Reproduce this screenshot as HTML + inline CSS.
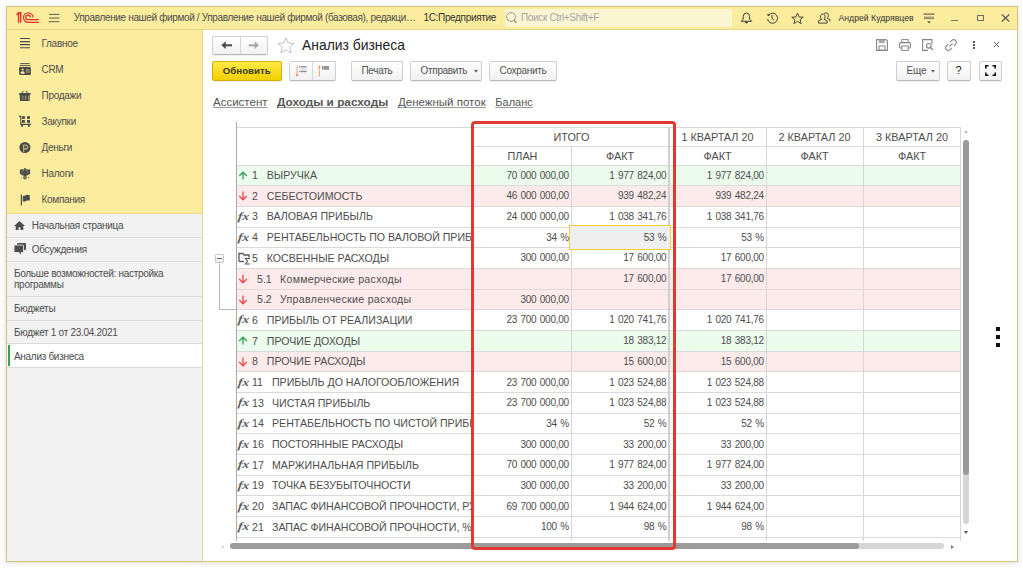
<!DOCTYPE html>
<html><head><meta charset="utf-8">
<style>
*{box-sizing:border-box;margin:0;padding:0}
html,body{width:1023px;height:568px;overflow:hidden;background:#fff;font-family:"Liberation Sans",sans-serif;color:#4d4d4d}
.abs,div,svg{position:absolute}
#win{left:5px;top:5px;width:1014px;height:558px;box-shadow:0 0 3px 1px rgba(0,0,0,0.08)}
#frame{left:6px;top:6px;width:1012px;height:556px;border:1px solid #d3c67c;background:#fff;box-shadow:0 1px 5px rgba(0,0,0,0.14)}
#hdr{left:7px;top:7px;width:1010px;height:22px;background:#fbec9e}
#hdrline{left:7px;top:29px;width:1010px;height:1px;background:#e3d488}
#side{left:7px;top:30px;width:195px;height:531px;background:#f2f2f2}
#sidey{left:7px;top:30px;width:195px;height:183px;background:#fbec9e}
#sideyline{left:7px;top:213px;width:195px;height:1px;background:#e8d98c}
#sideline{left:202px;top:30px;width:1px;height:531px;background:#e6d88f}
.htxt{white-space:nowrap;font-size:10px;letter-spacing:-0.35px;color:#4d4d4d;line-height:12px}
.si{white-space:nowrap;font-size:10px;letter-spacing:-0.29px;color:#4d4d4d;line-height:13.4px}
.sec{left:7px;width:195px;height:1px;background:#dcdcdc}
.st{white-space:nowrap;font-size:10px;letter-spacing:-0.3px;color:#4d4d4d;line-height:14.4px}
.btn{border:1px solid #cfcfcf;border-bottom-color:#b8b8b8;border-radius:2px;background:linear-gradient(#ffffff,#f1f1f1);box-shadow:0 1px 0 rgba(0,0,0,0.06)}
.bt{white-space:nowrap;font-size:10px;letter-spacing:-0.33px;color:#525252;line-height:12px}
.lnk{white-space:nowrap;font-size:11.5px;color:#555;line-height:14px;text-decoration:underline;text-decoration-color:#9a9a9a;text-underline-offset:0.8px;text-decoration-skip-ink:none}
.rbg{left:237px;width:724px}
.hl{height:1px;background:#dadada}
.vl{width:1px;background:#d6d6d6}
.vl2{width:2px;background:#d0d0d0}
.th{white-space:nowrap;text-align:center;font-size:10.8px;color:#4d4d4d}
.tn{white-space:nowrap;font-size:10.6px;color:#4d4d4d;line-height:20.68px}
.tl{white-space:nowrap;overflow:hidden;font-size:10.6px;color:#4d4d4d;line-height:20.68px}
.tl2{letter-spacing:0.3px}
.td{white-space:nowrap;width:96px;text-align:right;font-size:10px;letter-spacing:-0.25px;word-spacing:0.9px;color:#4d4d4d;line-height:20.68px}
.fx{font-family:"Liberation Serif",serif;font-style:italic;font-weight:bold;font-size:11.2px;color:#5e5e5e;line-height:20.68px;letter-spacing:-0.1px;transform:scaleX(1.22) skewX(-6deg);transform-origin:0 50%}
.sel{border:1.4px solid #f7cb2e;background:#efefef}
</style></head><body>
<div id="frame"></div>
<div id="hdr"></div>
<div id="hdrline"></div>

<!-- header -->
<svg style="left:14px;top:10px" width="28" height="16" viewBox="14 10 28 16">
 <path d="M16.5 15.2L18.3 12.7" fill="none" stroke="#e0302c" stroke-width="1.3"/>
 <path d="M18.55 12.5V22.8M20.75 12.1V22.8M18 12.75H21.5" fill="none" stroke="#e0302c" stroke-width="1.4"/>
 <path d="M33.05 17.6A4.75 4.75 0 1 0 28.3 22.35H38.8" fill="none" stroke="#e0302c" stroke-width="1.3"/>
 <path d="M30.3 17.4A2.2 2.2 0 1 0 28.1 19.6H38.8" fill="none" stroke="#e0302c" stroke-width="1.3"/>
</svg>
<svg style="left:49px;top:13px" width="11" height="10" viewBox="0 0 11 10"><path d="M0 1.4H10.5M0 5H10.5M0 8.7H10.5" stroke="#5f5f4f" stroke-width="1"/></svg>
<div class="htxt" style="left:73.7px;top:12px">Управление нашей фирмой / Управление нашей фирмой (базовая), редакци…</div>
<div class="htxt" style="left:423.5px;top:12px;color:#333;letter-spacing:-0.34px">1С:Предприятие</div>
<div style="left:505px;top:9px;width:227px;height:18px;background:#fcf5d2"></div>
<svg style="left:505px;top:11px" width="13" height="13" viewBox="505 11 13 13"><circle cx="511" cy="17" r="4.4" fill="none" stroke="#8e8e8a" stroke-width="0.9"/><path d="M514 20.2L516.6 22.8" stroke="#8e8e8a" stroke-width="1.4"/></svg>
<div class="htxt" style="left:521px;top:12px;color:#a5a5a5;letter-spacing:-0.32px">Поиск Ctrl+Shift+F</div>
<!-- bell -->
<svg style="left:740px;top:11.5px" width="13" height="13" viewBox="740 11.5 13 13"><path d="M741.2 20.8H751.6L749.6 18.6V16.2Q749.5 12.6 746.4 12.4Q743.3 12.6 743.2 16.2V18.6Z" fill="none" stroke="#3d3d3d" stroke-width="1" stroke-linejoin="round"/><path d="M744.6 21.6H748.2L746.4 23.2Z" fill="#3d3d3d"/></svg>
<!-- history -->
<svg style="left:766px;top:11.5px" width="13" height="13" viewBox="766 11.5 13 13"><path d="M768.7 14.5A5 5 0 1 1 767.6 18.6" fill="none" stroke="#3d3d3d" stroke-width="1"/><path d="M767.2 14.2L768.9 15.4 769.7 13.6Z" fill="#3d3d3d" stroke="#3d3d3d" stroke-width="0.6"/><path d="M772 14.5V17.8L774 19.6" fill="none" stroke="#3d3d3d" stroke-width="1"/></svg>
<!-- star -->
<svg style="left:791px;top:11.5px" width="13" height="13" viewBox="0 0 13 13"><path d="M6.5 1.2L8.2 5 12.2 5.2 9.1 7.7 10.2 11.6 6.5 9.4 2.8 11.6 3.9 7.7 0.8 5.2 4.8 5Z" fill="none" stroke="#3d3d3d" stroke-width="0.95" stroke-linejoin="round"/></svg>
<!-- user -->
<svg style="left:816.5px;top:11.5px" width="14" height="13" viewBox="816.5 11.5 14 13"><path d="M822.3 13.6C820.6 13.6 819.9 15 820 16.4C820.1 17.6 820.6 18.4 821.2 18.8L818 20.4V22.6H826.6V20.4L823.4 18.8C824 18.4 824.5 17.6 824.6 16.4C824.7 15 824 13.6 822.3 13.6Z" fill="none" stroke="#3d3d3d" stroke-width="0.95" stroke-linejoin="round"/><path d="M823.6 13.2C824.2 12.6 825 12.4 825.6 12.4C827.3 12.4 828 13.8 827.9 15.2C827.8 16.4 827.3 17.2 826.7 17.6L829.4 19.2V21" fill="none" stroke="#3d3d3d" stroke-width="0.95" stroke-linejoin="round"/></svg>
<div class="htxt" style="left:838.5px;top:12px;color:#333;font-size:8.7px;letter-spacing:0">Андрей Кудрявцев</div>
<svg style="left:923px;top:13px" width="12" height="11" viewBox="0 0 12 11"><path d="M0.5 1.1H11.5" stroke="#4a4a40" stroke-width="1"/><path d="M1 4.2H11M1 5.6H11" stroke="#85806a" stroke-width="1"/><path d="M4.2 8.4H7.8L6 10.2Z" fill="#333"/></svg>
<div style="left:951px;top:20px;width:7px;height:1.2px;background:#777"></div>
<div style="left:976.6px;top:14.6px;width:7.2px;height:6.8px;border:1px solid #6e6e64"></div>
<svg style="left:1001px;top:14px" width="9" height="8" viewBox="0 0 9 8"><path d="M0.8 0.5L8.2 7.5M8.2 0.5L0.8 7.5" stroke="#555" stroke-width="1.1"/></svg>

<!-- sidebar -->
<div id="side"></div>
<div id="sidey"></div>
<div id="sideyline"></div>
<div id="sideline"></div>
<svg class="ic" style="left:18px;top:36px" width="14" height="14" viewBox="18 36 14 14"><path d="M20 38.5H30M20 41.6H30M20 44.65H30M20 47.7H30" stroke="#4a4a4a" stroke-width="1.15"/></svg>
<div class="si" style="left:41.5px;top:37px">Главное</div>
<svg class="ic" style="left:18px;top:62px" width="14" height="14" viewBox="18 62 14 14"><rect x="20.3" y="63" width="9.4" height="1.1" fill="#4a4a4a" opacity="0.85"/><rect x="19.6" y="65" width="10.8" height="1.1" fill="#4a4a4a" opacity="0.85"/><rect x="19.1" y="67" width="11.8" height="8" rx="1.2" fill="#4a4a4a"/><circle cx="22.6" cy="69.4" r="1" fill="#fbec9e"/><path d="M20.6 73.8V72.6L21.8 71.2H23.4L24.6 72.6V73.8Z" fill="#fbec9e"/><rect x="26" y="69" width="3.4" height="3.8" fill="#a89e6a"/><path d="M26.3 70H29M26.3 71.8H29" stroke="#4a4a4a" stroke-width="0.6"/></svg>
<div class="si" style="left:41.5px;top:63px">CRM</div>
<svg class="ic" style="left:18px;top:89px" width="14" height="13" viewBox="18 89 14 13"><path d="M21.8 93.2L23.4 90.9M27.6 93.2L26 90.9" stroke="#4a4a4a" stroke-width="1"/><rect x="19" y="93" width="11.5" height="1.9" rx="0.6" fill="#4a4a4a"/><path d="M19.8 94.8H29.8L29.6 100.9H20Z" fill="#4a4a4a"/><path d="M22.7 95.6V99.8M25.6 95.6V99.8M28.5 95.6V99.8" stroke="#a89e6a" stroke-width="1"/></svg>
<div class="si" style="left:41.5px;top:89px">Продажи</div>
<svg class="ic" style="left:18px;top:115px" width="14" height="13" viewBox="18 115 14 13"><path d="M19 116.4H20.8V124.4H30.8" fill="none" stroke="#4a4a4a" stroke-width="1.1"/><rect x="22" y="116.2" width="2.9" height="2.7" fill="#4a4a4a"/><rect x="27" y="116.2" width="2.9" height="2.7" fill="#4a4a4a"/><rect x="22" y="120" width="2.9" height="2.8" fill="#4a4a4a"/><rect x="27" y="120" width="2.9" height="2.8" fill="#4a4a4a"/><rect x="21.2" y="124.4" width="1.8" height="2.4" fill="#4a4a4a"/><rect x="28" y="124.4" width="1.8" height="2.4" fill="#4a4a4a"/></svg>
<div class="si" style="left:41.5px;top:115px">Закупки</div>
<svg class="ic" style="left:18px;top:141px" width="14" height="14" viewBox="18 141 14 14"><circle cx="24.9" cy="147.5" r="5.5" fill="#4a4a4a"/><path d="M23.6 152.2V145.2H25.8A1.9 1.9 0 0 1 25.8 149H23.6" fill="none" stroke="#b5ab78" stroke-width="1.3"/></svg>
<div class="si" style="left:41.5px;top:141px">Деньги</div>
<svg class="ic" style="left:18px;top:166px" width="14" height="15" viewBox="18 166 14 15"><rect x="24.2" y="168" width="1.6" height="1.5" fill="#4a4a4a"/><path d="M19.9 169.6L23.8 169.2L24.3 175.8L21.6 175L19.9 173.2Z" fill="#4a4a4a"/><path d="M30.1 169.6L26.2 169.2L25.7 175.8L28.4 175L30.1 173.2Z" fill="#4a4a4a"/><rect x="23.8" y="169.4" width="2.4" height="7.2" fill="#4a4a4a"/><path d="M23.1 176.6H26.9L26.7 178.8Q25 180.3 23.3 178.8Z" fill="#4a4a4a" opacity="0.85"/><circle cx="22.9" cy="170.9" r="0.65" fill="#b9ae78"/><circle cx="27.1" cy="170.9" r="0.65" fill="#b9ae78"/><path d="M21.6 172.2L23 173.6M28.4 172.2L27 173.6" stroke="#b9ae78" stroke-width="0.6"/><circle cx="28.6" cy="177.6" r="0.65" fill="#4a4a4a"/><path d="M21.4 177V178.8" stroke="#9a9070" stroke-width="0.8"/><path d="M23.5 177.8H26.5" stroke="#b9ae78" stroke-width="0.5"/></svg>
<div class="si" style="left:41.5px;top:167px">Налоги</div>
<svg class="ic" style="left:18px;top:192px" width="14" height="15" viewBox="18 192 14 15"><path d="M21.4 194.4V205.5" stroke="#4a4a4a" stroke-width="1.2"/><path d="M22.8 196C24.5 196.6 25.8 194.6 27.6 194.8C28.6 194.9 29.3 195.2 29.8 195.4V200.9C29 200.4 28.3 200.3 27.6 200.4C25.8 200.6 24.5 202 22.8 201.5Z" fill="#4a4a4a"/></svg>
<div class="si" style="left:41.5px;top:193px">Компания</div>
<!-- sections -->
<svg style="left:14px;top:220.5px" width="11" height="9" viewBox="0 0 11 9"><path d="M5.5 0L11 5H9.3V9H6.5V6.2H4.5V9H1.7V5H0Z" fill="#4d4d4d"/></svg>
<div class="st" style="left:31.8px;top:219px">Начальная страница</div>
<div class="sec" style="top:237px"></div>
<svg style="left:14px;top:243px" width="12" height="12" viewBox="0 0 12 12"><rect x="3" y="0" width="9" height="7" rx="1" fill="#4d4d4d"/><rect x="0" y="2" width="9.5" height="7.5" rx="1" fill="#4d4d4d" stroke="#f2f2f2" stroke-width="0.8"/><path d="M5 9.3L6.3 11.8 7.2 9.3Z" fill="#4d4d4d"/></svg>
<div class="st" style="left:31.8px;top:242.5px">Обсуждения</div>
<div class="sec" style="top:261px"></div>
<div class="st" style="left:14px;top:266.5px">Больше возможностей: настройка</div>
<div class="st" style="left:14px;top:278px">программы</div>
<div class="sec" style="top:296px"></div>
<div class="st" style="left:14px;top:302px">Бюджеты</div>
<div class="sec" style="top:320px"></div>
<div class="st" style="left:14px;top:325.5px">Бюджет 1 от 23.04.2021</div>
<div class="sec" style="top:343px"></div>
<div style="left:7px;top:344px;width:195px;height:23px;background:#fff"></div>
<div style="left:8px;top:345px;width:2px;height:21px;background:#3aa05a"></div>
<div class="st" style="left:14px;top:349.5px">Анализ бизнеса</div>
<div class="sec" style="top:367px"></div>

<!-- form header -->
<div class="btn" style="left:212px;top:36px;width:56px;height:18.5px"></div>
<div style="left:240px;top:37px;width:1px;height:17px;background:#d4d4d4"></div>
<svg style="left:220px;top:40px" width="14" height="10" viewBox="220 40 14 10"><path d="M221.3 45.2L225.8 41.3V49.1Z" fill="#4e4e4e"/><path d="M225 45.3H232" stroke="#4e4e4e" stroke-width="2.1"/></svg>
<svg style="left:247px;top:40px" width="14" height="10" viewBox="247 40 14 10"><path d="M259 45.2L254.6 41.3V49.1Z" fill="#a8a8a8"/><path d="M248.8 45.3H255.4" stroke="#a8a8a8" stroke-width="2.1"/></svg>
<svg style="left:276.5px;top:36.5px" width="18" height="17" viewBox="0 0 18 17"><path d="M9 0.8L11.3 6 17 6.4 12.7 10.2 14.1 16 9 12.9 3.9 16 5.3 10.2 1 6.4 6.7 6Z" fill="#fff" stroke="#b5bcc3" stroke-width="0.9" stroke-linejoin="round"/></svg>
<div style="left:302px;top:37.4px;white-space:nowrap;font-size:13.9px;color:#222;line-height:16px">Анализ бизнеса</div>

<svg style="left:875.5px;top:39px" width="12" height="12" viewBox="0 0 12 12"><path d="M0.6 0.6H10L11.4 2V11.4H0.6Z" fill="none" stroke="#858585" stroke-width="1.1"/><rect x="2.8" y="0.6" width="6" height="3.6" fill="#a8a8a8"/><rect x="3" y="7" width="6" height="4.2" fill="none" stroke="#858585" stroke-width="1"/></svg>
<svg style="left:899px;top:39px" width="12" height="12" viewBox="0 0 12 12"><rect x="2.8" y="0.6" width="6.4" height="3" fill="none" stroke="#858585" stroke-width="1"/><rect x="0.6" y="3.6" width="10.8" height="5.4" rx="1" fill="none" stroke="#858585" stroke-width="1.1"/><rect x="2.8" y="7" width="6.4" height="4.4" fill="#fff" stroke="#858585" stroke-width="1"/></svg>
<svg style="left:922px;top:39px" width="12" height="12" viewBox="0 0 12 12"><path d="M6 11.4H0.6V0.6H10V5" fill="none" stroke="#858585" stroke-width="1.1"/><circle cx="6.8" cy="6.8" r="2.3" fill="none" stroke="#858585" stroke-width="1.1"/><path d="M8.5 8.5L11 11" stroke="#858585" stroke-width="1.3"/></svg>
<svg style="left:945px;top:39px" width="12" height="12" viewBox="0 0 12 12"><path d="M5 3.2L6.8 1.4A2 2 0 0 1 10.6 5.2L8.8 7M3.2 5L1.4 6.8A2 2 0 0 0 5.2 10.6L7 8.8M4.3 7.7L7.7 4.3" fill="none" stroke="#8a8a8a" stroke-width="1.1"/></svg>
<div style="left:972.6px;top:41.2px;width:2.2px;height:2.2px;background:#555"></div>
<div style="left:972.6px;top:44.1px;width:2.2px;height:2.2px;background:#555"></div>
<div style="left:972.6px;top:47px;width:2.2px;height:2.2px;background:#555"></div>
<svg style="left:993px;top:40.8px" width="7" height="7" viewBox="0 0 7 7"><path d="M1 1L6 6M6 1L1 6" stroke="#666" stroke-width="1"/></svg>

<!-- toolbar -->
<div style="left:212px;top:61px;width:69.5px;height:20px;border:1px solid #d6b000;border-radius:2px;background:linear-gradient(#ffeb4a,#f3cf00);box-shadow:0 1px 0 rgba(0,0,0,0.08)"></div>
<div style="left:222.8px;top:65px;white-space:nowrap;font-size:9.7px;letter-spacing:0px;font-weight:bold;color:#3b3b2b;line-height:12px">Обновить</div>

<div class="btn" style="left:289px;top:61px;width:47px;height:19.5px"></div>
<div style="left:312px;top:62px;width:1px;height:18px;background:#d8d8d8"></div>
<svg style="left:294px;top:63px" width="40" height="16" viewBox="294 63 40 16"><path d="M297.1 65.3V75" stroke="#f49a66" stroke-width="0.9"/><circle cx="297.1" cy="75.2" r="1.15" fill="#f28a50"/><rect x="299.1" y="66.1" width="0.8" height="1.6" fill="#8a8a8a"/><rect x="300.3" y="66.1" width="6.4" height="1.5" fill="#8c8c8c"/><rect x="300.3" y="67.6" width="6.4" height="2.6" fill="#e2e2e2"/><rect x="299.1" y="70.8" width="0.8" height="1.2" fill="#8a8a8a"/><rect x="300.3" y="70.8" width="6.4" height="1.3" fill="#8c8c8c"/><rect x="300.3" y="72.1" width="6.4" height="1.6" fill="#e6e6e6"/><path d="M319.4 66.5V76.6" stroke="#f49a66" stroke-width="0.9"/><circle cx="319.4" cy="66.8" r="1.15" fill="#f28a50"/><rect x="322" y="66" width="0.9" height="3.8" fill="#8a8a8a"/><rect x="323.3" y="66" width="5.7" height="3.8" fill="#939393"/></svg>
<div class="btn" style="left:351px;top:61px;width:52px;height:20px"></div>
<div class="bt" style="left:361.5px;top:65.3px">Печать</div>
<div class="btn" style="left:410px;top:61px;width:72px;height:20px"></div>
<div class="bt" style="left:420.6px;top:65.3px">Отправить</div>
<svg style="left:473.5px;top:70.3px" width="4" height="2.5" viewBox="0 0 4 2.5"><path d="M0 0H4L2 2.5Z" fill="#555"/></svg>
<div class="btn" style="left:489px;top:61px;width:68px;height:20px"></div>
<div class="bt" style="left:499.6px;top:65.3px">Сохранить</div>

<div class="btn" style="left:896px;top:61px;width:44px;height:20px"></div>
<div class="bt" style="left:906.5px;top:64.5px;letter-spacing:-0.1px">Еще</div>
<svg style="left:931px;top:70.3px" width="4" height="2.5" viewBox="0 0 4 2.5"><path d="M0 0H4L2 2.5Z" fill="#555"/></svg>
<div class="btn" style="left:947px;top:61px;width:24px;height:20px"></div>
<div class="bt" style="left:955.5px;top:64.3px;font-size:11px;color:#222">?</div>
<div class="btn" style="left:978.5px;top:61px;width:23px;height:20px"></div>
<svg style="left:984.5px;top:65px" width="11" height="11" viewBox="0 0 11 11"><path d="M0.8 3.5V0.8H3.5M7.5 0.8H10.2V3.5M10.2 7.5V10.2H7.5M3.5 10.2H0.8V7.5" fill="none" stroke="#111" stroke-width="1.6"/></svg>

<!-- links -->
<div class="lnk" style="left:213px;top:95px">Ассистент</div>
<div class="lnk" style="left:277px;top:95px;font-weight:bold;font-size:11.8px;color:#555">Доходы и расходы</div>
<div class="lnk" style="left:398px;top:95px">Денежный поток</div>
<div class="lnk" style="left:495.3px;top:95px;font-size:11px">Баланс</div>

<!-- table -->
<div class="rbg" style="top:165.10px;height:20.68px;background:#ebfbec"></div>
<div class="rbg" style="top:185.78px;height:20.68px;background:#fdebeb"></div>
<div class="rbg" style="top:206.46px;height:20.68px;background:#ffffff"></div>
<div class="rbg" style="top:227.14px;height:20.68px;background:#ffffff"></div>
<div class="rbg" style="top:247.82px;height:20.68px;background:#ffffff"></div>
<div class="rbg" style="top:268.50px;height:20.68px;background:#fdebeb"></div>
<div class="rbg" style="top:289.18px;height:20.68px;background:#fdebeb"></div>
<div class="rbg" style="top:309.86px;height:20.68px;background:#ffffff"></div>
<div class="rbg" style="top:330.54px;height:20.68px;background:#ebfbec"></div>
<div class="rbg" style="top:351.22px;height:20.68px;background:#fdebeb"></div>
<div class="rbg" style="top:371.90px;height:20.68px;background:#ffffff"></div>
<div class="rbg" style="top:392.58px;height:20.68px;background:#ffffff"></div>
<div class="rbg" style="top:413.26px;height:20.68px;background:#ffffff"></div>
<div class="rbg" style="top:433.94px;height:20.68px;background:#ffffff"></div>
<div class="rbg" style="top:454.62px;height:20.68px;background:#ffffff"></div>
<div class="rbg" style="top:475.30px;height:20.68px;background:#ffffff"></div>
<div class="rbg" style="top:495.98px;height:20.68px;background:#ffffff"></div>
<div class="rbg" style="top:516.66px;height:20.68px;background:#ffffff"></div>
<div class="hl" style="top:127px;left:236px;width:725px"></div>
<div class="hl" style="top:146px;left:472px;width:489px"></div>
<div class="hl" style="top:165px;left:236px;width:725px"></div>
<div class="hl" style="top:185px;left:236px;width:725px"></div>
<div class="hl" style="top:206px;left:236px;width:725px"></div>
<div class="hl" style="top:227px;left:236px;width:725px"></div>
<div class="hl" style="top:247px;left:236px;width:725px"></div>
<div class="hl" style="top:268px;left:236px;width:725px"></div>
<div class="hl" style="top:289px;left:236px;width:725px"></div>
<div class="hl" style="top:309px;left:236px;width:725px"></div>
<div class="hl" style="top:330px;left:236px;width:725px"></div>
<div class="hl" style="top:351px;left:236px;width:725px"></div>
<div class="hl" style="top:371px;left:236px;width:725px"></div>
<div class="hl" style="top:392px;left:236px;width:725px"></div>
<div class="hl" style="top:413px;left:236px;width:725px"></div>
<div class="hl" style="top:433px;left:236px;width:725px"></div>
<div class="hl" style="top:454px;left:236px;width:725px"></div>
<div class="hl" style="top:475px;left:236px;width:725px"></div>
<div class="hl" style="top:495px;left:236px;width:725px"></div>
<div class="hl" style="top:516px;left:236px;width:725px"></div>
<div class="hl" style="top:537px;left:236px;width:725px"></div>
<div class="vl" style="left:236px;top:122px;height:419px;background:#a9a9a9"></div>
<div class="vl" style="left:472px;top:127px;height:414px"></div>
<div class="vl" style="left:571px;top:146px;height:395px"></div>
<div class="vl" style="left:669px;top:127px;height:414px"></div>
<div class="vl" style="left:766px;top:127px;height:414px"></div>
<div class="vl" style="left:863px;top:127px;height:414px"></div>
<div class="vl" style="left:960px;top:127px;height:414px"></div>
<div class="vl2" style="left:668px;top:127px;height:414px"></div>
<div class="th" style="left:474px;width:195px;top:127.7px;height:19px;line-height:19px">ИТОГО</div>
<div class="th" style="left:474px;width:97px;top:146.7px;height:19px;line-height:19px">ПЛАН</div>
<div class="th" style="left:571px;width:98px;top:146.7px;height:19px;line-height:19px">ФАКТ</div>
<div class="th" style="left:669px;width:97px;top:127.7px;height:19px;line-height:19px">1 КВАРТАЛ 20</div>
<div class="th" style="left:669px;width:97px;top:146.7px;height:19px;line-height:19px">ФАКТ</div>
<div class="th" style="left:766px;width:97px;top:127.7px;height:19px;line-height:19px">2 КВАРТАЛ 20</div>
<div class="th" style="left:766px;width:97px;top:146.7px;height:19px;line-height:19px">ФАКТ</div>
<div class="th" style="left:863px;width:98px;top:127.7px;height:19px;line-height:19px">3 КВАРТАЛ 20</div>
<div class="th" style="left:863px;width:98px;top:146.7px;height:19px;line-height:19px">ФАКТ</div>
<div class="sel" style="left:569px;top:225.34px;width:102px;height:24.4px"></div>
<svg class="ic" style="left:238px;top:170.6px" width="10" height="10" viewBox="0 0 10 10"><path d="M5 8.5V1.2M1.2 5L5 1.2 8.8 5" fill="none" stroke="#35a55c" stroke-width="1.35"/></svg>
<div class="tn" style="left:252px;top:165.10px">1</div>
<div class="tl" style="left:266.8px;top:165.10px;width:204.2px">ВЫРУЧКА</div>
<div class="td" style="left:472.9px;top:165.70px">70 000 000,00</div>
<div class="td" style="left:570.4px;top:165.70px">1 977 824,00</div>
<div class="td" style="left:667.9px;top:165.70px">1 977 824,00</div>
<svg class="ic" style="left:238px;top:191.28px" width="10" height="10" viewBox="0 0 10 10"><path d="M5 0.5V8.8M1.2 5L5 8.8 8.8 5" fill="none" stroke="#f04a4c" stroke-width="1.35"/></svg>
<div class="tn" style="left:252px;top:185.78px">2</div>
<div class="tl" style="left:266.8px;top:185.78px;width:204.2px">СЕБЕСТОИМОСТЬ</div>
<div class="td" style="left:472.9px;top:186.38px">46 000 000,00</div>
<div class="td" style="left:570.4px;top:186.38px">939 482,24</div>
<div class="td" style="left:667.9px;top:186.38px">939 482,24</div>
<div class="fx" style="left:237.7px;top:206.06px">fx</div>
<div class="tn" style="left:252px;top:206.46px">3</div>
<div class="tl" style="left:266.8px;top:206.46px;width:204.2px">ВАЛОВАЯ ПРИБЫЛЬ</div>
<div class="td" style="left:472.9px;top:207.06px">24 000 000,00</div>
<div class="td" style="left:570.4px;top:207.06px">1 038 341,76</div>
<div class="td" style="left:667.9px;top:207.06px">1 038 341,76</div>
<div class="fx" style="left:237.7px;top:226.74px">fx</div>
<div class="tn" style="left:252px;top:227.14px">4</div>
<div class="tl" style="left:266.8px;top:227.14px;width:204.2px">РЕНТАБЕЛЬНОСТЬ ПО ВАЛОВОЙ ПРИБЫЛИ</div>
<div class="td" style="left:472.9px;top:227.74px">34 %</div>
<div class="td" style="left:570.4px;top:227.74px">53 %</div>
<div class="td" style="left:667.9px;top:227.74px">53 %</div>
<svg class="ic" style="left:238px;top:251.82px" width="13" height="13" viewBox="0 0 13 13"><path d="M1 9.5V1.5h4l1 1.5h5v2.5" fill="none" stroke="#555" stroke-width="1.3"/><path d="M1 9.5h5" fill="none" stroke="#555" stroke-width="1.3"/><path d="M12 6.5H7.5l2 2.8-2 2.7H12" fill="none" stroke="#555" stroke-width="1.1"/></svg>
<div class="tn" style="left:252px;top:247.82px">5</div>
<div class="tl" style="left:266.8px;top:247.82px;width:204.2px">КОСВЕННЫЕ РАСХОДЫ</div>
<div class="td" style="left:472.9px;top:248.42px">300 000,00</div>
<div class="td" style="left:570.4px;top:248.42px">17 600,00</div>
<div class="td" style="left:667.9px;top:248.42px">17 600,00</div>
<svg class="ic" style="left:238px;top:274.0px" width="10" height="10" viewBox="0 0 10 10"><path d="M5 0.5V8.8M1.2 5L5 8.8 8.8 5" fill="none" stroke="#f04a4c" stroke-width="1.35"/></svg>
<div class="tn" style="left:257px;top:268.50px">5.1</div>
<div class="tl tl2" style="left:280px;top:268.50px;width:190px">Коммерческие расходы</div>
<div class="td" style="left:570.4px;top:269.10px">17 600,00</div>
<div class="td" style="left:667.9px;top:269.10px">17 600,00</div>
<svg class="ic" style="left:238px;top:294.68px" width="10" height="10" viewBox="0 0 10 10"><path d="M5 0.5V8.8M1.2 5L5 8.8 8.8 5" fill="none" stroke="#f04a4c" stroke-width="1.35"/></svg>
<div class="tn" style="left:257px;top:289.18px">5.2</div>
<div class="tl tl2" style="left:280px;top:289.18px;width:190px">Управленческие расходы</div>
<div class="td" style="left:472.9px;top:289.78px">300 000,00</div>
<div class="fx" style="left:237.7px;top:309.46px">fx</div>
<div class="tn" style="left:252px;top:309.86px">6</div>
<div class="tl" style="left:266.8px;top:309.86px;width:204.2px">ПРИБЫЛЬ ОТ РЕАЛИЗАЦИИ</div>
<div class="td" style="left:472.9px;top:310.46px">23 700 000,00</div>
<div class="td" style="left:570.4px;top:310.46px">1 020 741,76</div>
<div class="td" style="left:667.9px;top:310.46px">1 020 741,76</div>
<svg class="ic" style="left:238px;top:336.03999999999996px" width="10" height="10" viewBox="0 0 10 10"><path d="M5 8.5V1.2M1.2 5L5 1.2 8.8 5" fill="none" stroke="#35a55c" stroke-width="1.35"/></svg>
<div class="tn" style="left:252px;top:330.54px">7</div>
<div class="tl" style="left:266.8px;top:330.54px;width:204.2px">ПРОЧИЕ ДОХОДЫ</div>
<div class="td" style="left:570.4px;top:331.14px">18 383,12</div>
<div class="td" style="left:667.9px;top:331.14px">18 383,12</div>
<svg class="ic" style="left:238px;top:356.72px" width="10" height="10" viewBox="0 0 10 10"><path d="M5 0.5V8.8M1.2 5L5 8.8 8.8 5" fill="none" stroke="#f04a4c" stroke-width="1.35"/></svg>
<div class="tn" style="left:252px;top:351.22px">8</div>
<div class="tl" style="left:266.8px;top:351.22px;width:204.2px">ПРОЧИЕ РАСХОДЫ</div>
<div class="td" style="left:570.4px;top:351.82px">15 600,00</div>
<div class="td" style="left:667.9px;top:351.82px">15 600,00</div>
<div class="fx" style="left:237.7px;top:371.50px">fx</div>
<div class="tn" style="left:252px;top:371.90px">11</div>
<div class="tl" style="left:272px;top:371.90px;width:199px">ПРИБЫЛЬ ДО НАЛОГООБЛОЖЕНИЯ</div>
<div class="td" style="left:472.9px;top:372.50px">23 700 000,00</div>
<div class="td" style="left:570.4px;top:372.50px">1 023 524,88</div>
<div class="td" style="left:667.9px;top:372.50px">1 023 524,88</div>
<div class="fx" style="left:237.7px;top:392.18px">fx</div>
<div class="tn" style="left:252px;top:392.58px">13</div>
<div class="tl" style="left:272px;top:392.58px;width:199px">ЧИСТАЯ ПРИБЫЛЬ</div>
<div class="td" style="left:472.9px;top:393.18px">23 700 000,00</div>
<div class="td" style="left:570.4px;top:393.18px">1 023 524,88</div>
<div class="td" style="left:667.9px;top:393.18px">1 023 524,88</div>
<div class="fx" style="left:237.7px;top:412.86px">fx</div>
<div class="tn" style="left:252px;top:413.26px">14</div>
<div class="tl" style="left:272px;top:413.26px;width:199px">РЕНТАБЕЛЬНОСТЬ ПО ЧИСТОЙ ПРИБЫЛИ</div>
<div class="td" style="left:472.9px;top:413.86px">34 %</div>
<div class="td" style="left:570.4px;top:413.86px">52 %</div>
<div class="td" style="left:667.9px;top:413.86px">52 %</div>
<div class="fx" style="left:237.7px;top:433.54px">fx</div>
<div class="tn" style="left:252px;top:433.94px">16</div>
<div class="tl" style="left:272px;top:433.94px;width:199px">ПОСТОЯННЫЕ РАСХОДЫ</div>
<div class="td" style="left:472.9px;top:434.54px">300 000,00</div>
<div class="td" style="left:570.4px;top:434.54px">33 200,00</div>
<div class="td" style="left:667.9px;top:434.54px">33 200,00</div>
<div class="fx" style="left:237.7px;top:454.22px">fx</div>
<div class="tn" style="left:252px;top:454.62px">17</div>
<div class="tl" style="left:272px;top:454.62px;width:199px">МАРЖИНАЛЬНАЯ ПРИБЫЛЬ</div>
<div class="td" style="left:472.9px;top:455.22px">70 000 000,00</div>
<div class="td" style="left:570.4px;top:455.22px">1 977 824,00</div>
<div class="td" style="left:667.9px;top:455.22px">1 977 824,00</div>
<div class="fx" style="left:237.7px;top:474.90px">fx</div>
<div class="tn" style="left:252px;top:475.30px">19</div>
<div class="tl" style="left:272px;top:475.30px;width:199px">ТОЧКА БЕЗУБЫТОЧНОСТИ</div>
<div class="td" style="left:472.9px;top:475.90px">300 000,00</div>
<div class="td" style="left:570.4px;top:475.90px">33 200,00</div>
<div class="td" style="left:667.9px;top:475.90px">33 200,00</div>
<div class="fx" style="left:237.7px;top:495.58px">fx</div>
<div class="tn" style="left:252px;top:495.98px">20</div>
<div class="tl" style="left:272px;top:495.98px;width:199px">ЗАПАС ФИНАНСОВОЙ ПРОЧНОСТИ, РУБ</div>
<div class="td" style="left:472.9px;top:496.58px">69 700 000,00</div>
<div class="td" style="left:570.4px;top:496.58px">1 944 624,00</div>
<div class="td" style="left:667.9px;top:496.58px">1 944 624,00</div>
<div class="fx" style="left:237.7px;top:516.26px">fx</div>
<div class="tn" style="left:252px;top:516.66px">21</div>
<div class="tl" style="left:272px;top:516.66px;width:199px">ЗАПАС ФИНАНСОВОЙ ПРОЧНОСТИ, %</div>
<div class="td" style="left:472.9px;top:517.26px">100 %</div>
<div class="td" style="left:570.4px;top:517.26px">98 %</div>
<div class="td" style="left:667.9px;top:517.26px">98 %</div>

<!-- tree -->
<div style="left:214.5px;top:253.5px;width:9.5px;height:9.5px;border:1px solid #c8c8c8;border-radius:1px;background:linear-gradient(#fff,#ececec)"></div>
<div style="left:216.8px;top:257.6px;width:5px;height:1px;background:#666"></div>
<div style="left:219px;top:263px;width:1px;height:47px;background:#b8b8b8"></div>
<div style="left:219px;top:309px;width:17px;height:1px;background:#b8b8b8"></div>

<!-- scrollbars -->
<div style="left:230px;top:543.2px;width:714px;height:5.7px;border-radius:3px;background:#d6d6d6"></div>
<div style="left:230px;top:543.2px;width:629px;height:5.7px;border-radius:3px;background:#9b9b9b"></div>
<svg style="left:221px;top:544.5px" width="3" height="4" viewBox="0 0 3 4"><path d="M2.5 0.5V3.5L0 2Z" fill="#c4c4c4"/></svg>
<svg style="left:951px;top:544.5px" width="3" height="4" viewBox="0 0 3 4"><path d="M0 0V4L3 2Z" fill="#777"/></svg>
<div style="left:963px;top:139.5px;width:6px;height:384px;border-radius:3px;background:#d6d6d6"></div>
<div style="left:963px;top:139.5px;width:6px;height:335px;border-radius:3px;background:#9b9b9b"></div>
<svg style="left:964px;top:129.5px" width="4" height="3" viewBox="0 0 4 3"><path d="M0 3H4L2 0Z" fill="#bbb"/></svg>
<svg style="left:964px;top:531px" width="4" height="3" viewBox="0 0 4 3"><path d="M0 0H4L2 3Z" fill="#555"/></svg>

<!-- three dots -->
<div style="left:996px;top:327px;width:4px;height:4px;background:#111"></div>
<div style="left:996px;top:335px;width:4px;height:4px;background:#111"></div>
<div style="left:996px;top:343px;width:4px;height:4px;background:#111"></div>

<!-- red highlight -->
<div style="left:471px;top:121px;width:205px;height:428.5px;border:3px solid #e03a30;border-radius:4px"></div>
</body></html>
